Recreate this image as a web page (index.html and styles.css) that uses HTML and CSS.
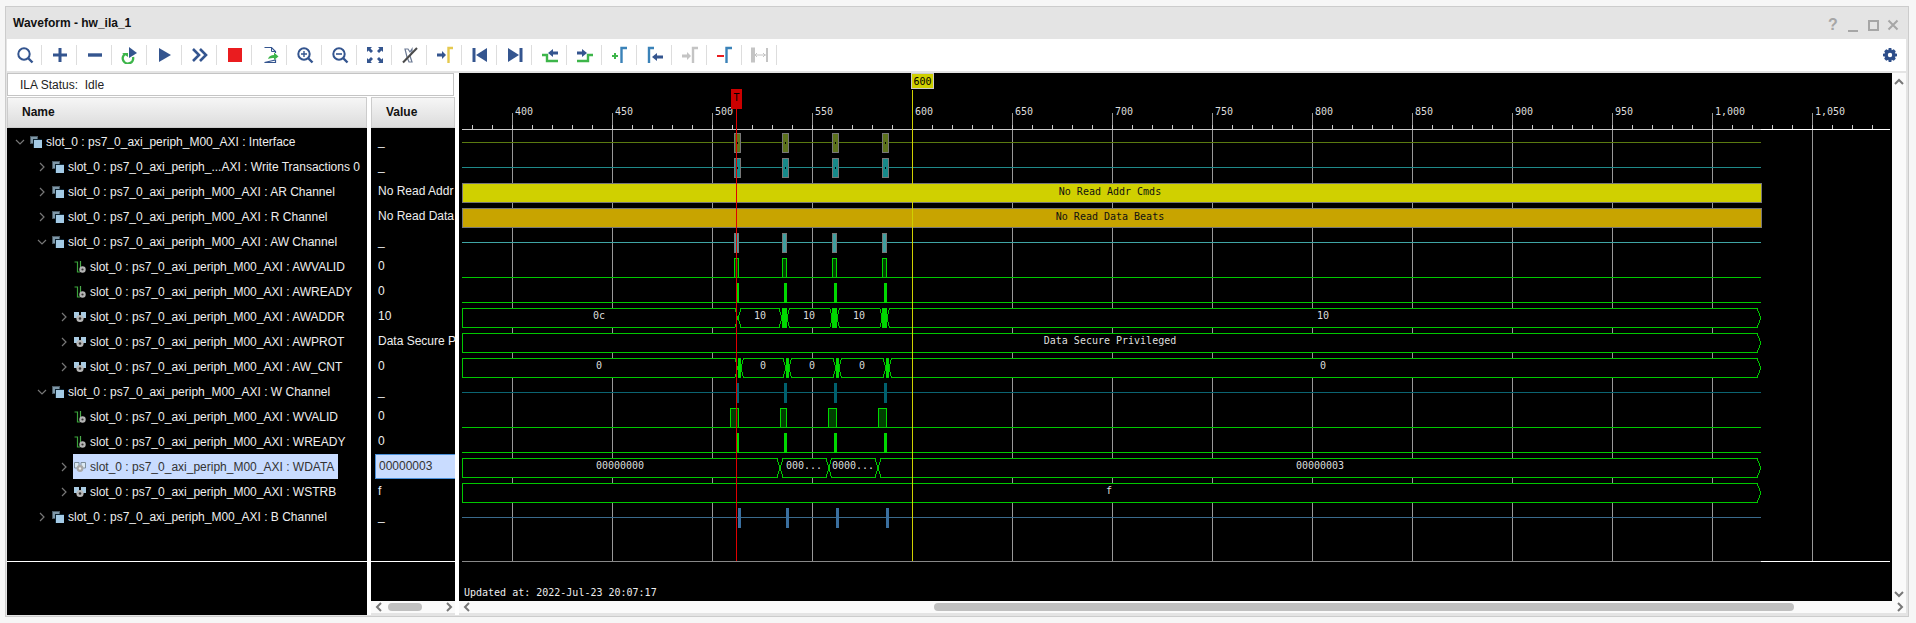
FILE: index.html
```html
<!DOCTYPE html>
<html lang="en">
<head>
    <meta charset="UTF-8">
    <title>Waveform - hw_ila_1</title>
    <link rel="stylesheet" href="styles.css">
</head>
<body>
    <svg class="defs" width="0" height="0">
        <symbol id="chev-r" viewBox="0 0 10 10"><path d="M3 1l4 4-4 4" fill="none" stroke="#777" stroke-width="1.2"/></symbol>
        <symbol id="chev-d" viewBox="0 0 10 10"><path d="M1 3l4 4 4-4" fill="none" stroke="#777" stroke-width="1.2"/></symbol>
        <symbol id="ic-group" viewBox="0 0 12 12">
            <rect x="0" y="0" width="8" height="8" fill="#4b5b66"/>
            <rect x="1" y="1" width="6" height="6" fill="#7f98a8"/>
            <rect x="3" y="3" width="9" height="9" fill="#0c2230"/>
            <rect x="4" y="4" width="8" height="8" fill="#a4cbe6"/>
        </symbol>
        <symbol id="ic-bit" viewBox="0 0 12 12">
            <path d="M0.5 1H3.5V11H6" fill="none" stroke="#3ba33b" stroke-width="1.2"/>
            <path d="M6.5 0V6" stroke="#4aa84a" stroke-width="1.2"/>
            <circle cx="8.5" cy="8.5" r="3.2" fill="#b5b5b5"/>
            <circle cx="8.5" cy="8.5" r="1.1" fill="#333"/>
        </symbol>
        <symbol id="ic-bus" viewBox="0 0 12 12">
            <path d="M0 1H5V5L3 7H0z" fill="#a9cbe2"/>
            <path d="M7 1H12V7H9L7 5z" fill="#a9cbe2"/>
            <circle cx="6" cy="7.5" r="3.6" fill="#b8b8b8"/>
            <circle cx="6" cy="7.5" r="1.3" fill="#333"/>
        </symbol>
        <symbol id="ic-bus-sel" viewBox="0 0 12 12">
            <path d="M0.5 1.5H5V5L3 7H0.5z" fill="#dce9f3" stroke="#7d8e9c"/>
            <path d="M7 1.5H11.5V7H9L7 5z" fill="#dce9f3" stroke="#7d8e9c"/>
            <circle cx="6" cy="7.5" r="3.4" fill="#a8a8a8"/>
            <circle cx="6" cy="7.5" r="1.2" fill="#f0f0f0"/>
        </symbol>
        <symbol id="ic-marker" viewBox="0 0 8 16"><path d="M1.5 16V1.5H7" fill="none" stroke="currentColor" stroke-width="2.4"/></symbol>
    </svg>

    <div class="window">
        <div class="titlebar">
            <span class="title">Waveform - hw_ila_1</span>
            <div class="win-btns">
                <span class="win-btn win-help">?</span>
                <svg class="win-btn" viewBox="0 0 20 20"><path d="M5 16H15" stroke="#a6a6a6" stroke-width="2"/></svg>
                <svg class="win-btn" viewBox="0 0 20 20"><rect x="6" y="6" width="9" height="9" fill="none" stroke="#a6a6a6" stroke-width="2"/></svg>
                <svg class="win-btn" viewBox="0 0 20 20"><path d="M5.5 5.5L14.5 14.5M14.5 5.5L5.5 14.5" stroke="#a6a6a6" stroke-width="2"/></svg>
            </div>
        </div>

        <div class="toolbar">
            <span class="tool"><svg viewBox="0 0 18 18"><circle cx="8" cy="8" r="5.7" fill="none" stroke="#34558f" stroke-width="2"/><path d="M12 12l4.5 4.5" stroke="#34558f" stroke-width="2.4"/></svg></span>
            <span class="tool"><svg viewBox="0 0 18 18"><path d="M2 9H16M9 2V16" stroke="#34558f" stroke-width="3"/></svg></span>
            <span class="tool"><svg viewBox="0 0 18 18"><path d="M2 9H16" stroke="#34558f" stroke-width="3.4"/></svg></span>
            <span class="tool"><svg viewBox="0 0 18 18"><path d="M8 1l8 6-8 5z" fill="#34558f"/><path d="M4 8a5.2 5.2 0 1 0 8 3" fill="none" stroke="#3db54a" stroke-width="2.4"/><path d="M1 7h6v4z" fill="#3db54a"/></svg></span>
            <span class="tool"><svg viewBox="0 0 18 18"><path d="M3 2L15 9 3 16z" fill="#34558f"/></svg></span>
            <span class="tool"><svg viewBox="0 0 18 18"><path d="M2 3L8 9 2 15M9 3L15 9 9 15" fill="none" stroke="#34558f" stroke-width="2.6"/></svg></span>
            <span class="tool"><svg viewBox="0 0 18 18"><rect x="2" y="2" width="14" height="14" fill="#ea1c1f"/></svg></span>
            <span class="tool"><svg viewBox="0 0 18 18"><path d="M3.5 1.5H10.5L14.5 5.5V7M14.5 14V16.5H3.5z" fill="#fff" stroke="#34558f" stroke-width="1.2"/><path d="M10.5 1.5V5.5H14.5" fill="none" stroke="#34558f"/><path d="M7 13c1-3 3-4 6-4V6.5L17.5 10.5 13 14V12c-2 0-4 0-6 1z" fill="#3db54a"/></svg></span>
            <span class="tool"><svg viewBox="0 0 18 18"><circle cx="8" cy="8" r="5.7" fill="none" stroke="#34558f" stroke-width="2"/><path d="M12 12l4.5 4.5" stroke="#34558f" stroke-width="2.4"/><path d="M5 8H11M8 5V11" stroke="#34558f" stroke-width="1.4"/></svg></span>
            <span class="tool"><svg viewBox="0 0 18 18"><circle cx="8" cy="8" r="5.7" fill="none" stroke="#34558f" stroke-width="2"/><path d="M12 12l4.5 4.5" stroke="#34558f" stroke-width="2.4"/><path d="M5 8H11" stroke="#34558f" stroke-width="1.6"/></svg></span>
            <span class="tool"><svg viewBox="0 0 18 18"><path d="M1 1H6L4.5 2.5 7 5 5 7 2.5 4.5 1 6zM17 1V6L15.500 4.500 13 7 11 5 13.500 2.500 12 1zM1 17V12L2.500 13.500 5 11 7 13 4.500 15.500 6 17zM17 17H12L13.500 15.500 11 13 13 11 15.500 13.500 17 12z" fill="#34558f"/></svg></span>
            <span class="tool"><svg viewBox="0 0 18 18"><path d="M4 3H7L9 6 11 3V6L9 10 11 16H8L6 11z" fill="none" stroke="#6c7a94" stroke-width="1.2"/><path d="M2 16.500L16 2" stroke="#4a4a4a" stroke-width="2"/></svg></span>
            <span class="tool"><svg viewBox="0 0 18 18"><path d="M1 7.500H6V5L10 9 6 13V10.500H1z" fill="#34558f"/><path d="M12.500 17V2H17" fill="none" stroke="#e5c94f" stroke-width="2.400"/></svg></span>
            <span class="tool"><svg viewBox="0 0 18 18"><path d="M3 2V16" stroke="#34558f" stroke-width="3"/><path d="M16 2L5 9 16 16z" fill="#34558f"/></svg></span>
            <span class="tool"><svg viewBox="0 0 18 18"><path d="M15 2V16" stroke="#34558f" stroke-width="3"/><path d="M2 2L13 9 2 16z" fill="#34558f"/></svg></span>
            <span class="tool"><svg viewBox="0 0 18 18"><path d="M1 9H6V15H17" fill="none" stroke="#3db54a" stroke-width="2.400"/><path d="M7 7L12 3V5.500H17V8.500H12V11z" fill="#34558f"/></svg></span>
            <span class="tool"><svg viewBox="0 0 18 18"><path d="M1 15H12V9H17" fill="none" stroke="#3db54a" stroke-width="2.400"/><path d="M1 5.500H6V3L11 7 6 11V8.500H1z" fill="#34558f"/></svg></span>
            <span class="tool"><svg viewBox="0 0 18 18"><path d="M1 10H7M4 7V13" stroke="#3db54a" stroke-width="2"/><path d="M10.500 17V2H16" fill="none" stroke="#3a82b8" stroke-width="2.400"/></svg></span>
            <span class="tool"><svg viewBox="0 0 18 18"><path d="M3 17V2H8" fill="none" stroke="#3a82b8" stroke-width="2.400"/><path d="M6 11L11 7V9.500H17V12.500H11V15z" fill="#34558f"/></svg></span>
            <span class="tool"><svg viewBox="0 0 18 18"><path d="M1 8.500H6V6L10 10 6 14V11.500H1z" fill="#c4c4c4"/><path d="M12 17V2H17" fill="none" stroke="#c4c4c4" stroke-width="2.400"/></svg></span>
            <span class="tool"><svg viewBox="0 0 18 18"><path d="M1 10H8" stroke="#ea1c1f" stroke-width="2"/><path d="M10.500 17V2H16" fill="none" stroke="#3a82b8" stroke-width="2.400"/></svg></span>
            <span class="tool"><svg viewBox="0 0 18 18"><path d="M2 2V16M16 2V16" stroke="#c4c4c4" stroke-width="2"/><path d="M3 9H15M6 7L4 9 6 11M12 7L14 9 12 11" fill="none" stroke="#c4c4c4"/><rect x="0.500" y="2" width="3" height="14" fill="none" stroke="#c4c4c4"/></svg></span>
            <span class="tool-end">
                <svg viewBox="0 0 16 16"><path d="M6.500 0H9.500L10 2.500 12.300 1.400 14.600 3.700 13.500 6 16 6.500V9.500L13.500 10 14.600 12.300 12.300 14.600 10 13.500 9.500 16H6.500L6 13.500 3.700 14.600 1.400 12.300 2.500 10 0 9.500V6.500L2.500 6 1.400 3.700 3.700 1.400 6 2.500zM8 5.500A2.500 2.500 0 1 0 8 10.500 2.500 2.500 0 1 0 8 5.500z" fill="#2d4e8a" fill-rule="evenodd"/></svg>
            </span>
        </div>

        <div class="main">
            <div class="left">
                <div class="status">ILA Status:&nbsp; Idle</div>
                <div class="columns">
                    <div class="names">
                        <div class="col-head col-head-name">Name</div>
                        <div class="tree">
                            <div class="row l1"><svg class="chev"><use href="#chev-d"/></svg><span class="node"><svg class="ic"><use href="#ic-group"/></svg>slot_0 : ps7_0_axi_periph_M00_AXI : Interface</span></div>
                            <div class="row l2"><svg class="chev"><use href="#chev-r"/></svg><span class="node"><svg class="ic"><use href="#ic-group"/></svg>slot_0 : ps7_0_axi_periph_...AXI : Write Transactions 0</span></div>
                            <div class="row l2"><svg class="chev"><use href="#chev-r"/></svg><span class="node"><svg class="ic"><use href="#ic-group"/></svg>slot_0 : ps7_0_axi_periph_M00_AXI : AR Channel</span></div>
                            <div class="row l2"><svg class="chev"><use href="#chev-r"/></svg><span class="node"><svg class="ic"><use href="#ic-group"/></svg>slot_0 : ps7_0_axi_periph_M00_AXI : R Channel</span></div>
                            <div class="row l2"><svg class="chev"><use href="#chev-d"/></svg><span class="node"><svg class="ic"><use href="#ic-group"/></svg>slot_0 : ps7_0_axi_periph_M00_AXI : AW Channel</span></div>
                            <div class="row l3"><span class="chev"></span><span class="node"><svg class="ic"><use href="#ic-bit"/></svg>slot_0 : ps7_0_axi_periph_M00_AXI : AWVALID</span></div>
                            <div class="row l3"><span class="chev"></span><span class="node"><svg class="ic"><use href="#ic-bit"/></svg>slot_0 : ps7_0_axi_periph_M00_AXI : AWREADY</span></div>
                            <div class="row l3"><svg class="chev"><use href="#chev-r"/></svg><span class="node"><svg class="ic"><use href="#ic-bus"/></svg>slot_0 : ps7_0_axi_periph_M00_AXI : AWADDR</span></div>
                            <div class="row l3"><svg class="chev"><use href="#chev-r"/></svg><span class="node"><svg class="ic"><use href="#ic-bus"/></svg>slot_0 : ps7_0_axi_periph_M00_AXI : AWPROT</span></div>
                            <div class="row l3"><svg class="chev"><use href="#chev-r"/></svg><span class="node"><svg class="ic"><use href="#ic-bus"/></svg>slot_0 : ps7_0_axi_periph_M00_AXI : AW_CNT</span></div>
                            <div class="row l2"><svg class="chev"><use href="#chev-d"/></svg><span class="node"><svg class="ic"><use href="#ic-group"/></svg>slot_0 : ps7_0_axi_periph_M00_AXI : W Channel</span></div>
                            <div class="row l3"><span class="chev"></span><span class="node"><svg class="ic"><use href="#ic-bit"/></svg>slot_0 : ps7_0_axi_periph_M00_AXI : WVALID</span></div>
                            <div class="row l3"><span class="chev"></span><span class="node"><svg class="ic"><use href="#ic-bit"/></svg>slot_0 : ps7_0_axi_periph_M00_AXI : WREADY</span></div>
                            <div class="row l3"><svg class="chev"><use href="#chev-r"/></svg><span class="node selected"><svg class="ic"><use href="#ic-bus-sel"/></svg>slot_0 : ps7_0_axi_periph_M00_AXI : WDATA</span></div>
                            <div class="row l3"><svg class="chev"><use href="#chev-r"/></svg><span class="node"><svg class="ic"><use href="#ic-bus"/></svg>slot_0 : ps7_0_axi_periph_M00_AXI : WSTRB</span></div>
                            <div class="row l2"><svg class="chev"><use href="#chev-r"/></svg><span class="node"><svg class="ic"><use href="#ic-group"/></svg>slot_0 : ps7_0_axi_periph_M00_AXI : B Channel</span></div>
                        </div>
                        <div class="tree-foot"></div>
                    </div>
                    <div class="values">
                        <div class="col-head col-head-value">Value</div>
                        <div class="tree">
                            <div class="val">_</div>
                            <div class="val">_</div>
                            <div class="val">No Read Addr Cmds</div>
                            <div class="val">No Read Data Beats</div>
                            <div class="val">_</div>
                            <div class="val">0</div>
                            <div class="val">0</div>
                            <div class="val">10</div>
                            <div class="val">Data Secure Privileged</div>
                            <div class="val">0</div>
                            <div class="val">_</div>
                            <div class="val">0</div>
                            <div class="val">0</div>
                            <div class="val val-selected">00000003</div>
                            <div class="val">f</div>
                            <div class="val">_</div>
                        </div>
                        <div class="tree-foot tree-foot-value"></div>
                        <div class="hscroll hscroll-value">
                            <svg class="sb-arrow" viewBox="0 0 8 10"><path d="M6 1L2 5 6 9" fill="none" stroke="#777" stroke-width="2"/></svg>
                            <span class="thumb thumb-value"></span>
                            <svg class="sb-arrow" viewBox="0 0 8 10"><path d="M2 1L6 5 2 9" fill="none" stroke="#777" stroke-width="2"/></svg>
                        </div>
                    </div>
                </div>
            </div>

            <div class="wave-area">
                <svg class="wave" viewBox="459 73 1433 528">
                    <!-- grid and ruler -->
                    <path class="grid" d="M512.500 113V561M612.500 113V561M712.500 113V561M812.500 113V561M912.500 113V561M1012.500 113V561M1112.500 113V561M1212.500 113V561M1312.500 113V561M1412.500 113V561M1512.500 113V561M1612.500 113V561M1712.500 113V561M1812.500 113V561"/>
                    <path class="ticks" d="M472 127H1880"/>
                    <path class="axis" d="M462 129.500H1761"/>
                    <path class="axis-end" d="M1761 129.500H1890"/>
                    <path class="foot" d="M462 561.500H1761"/>
                    <path class="axis-end" d="M1761 561.500H1890"/>
                    <g class="ruler">
                        <text x="515" y="115">400</text><text x="615" y="115">450</text><text x="715" y="115">500</text><text x="815" y="115">550</text><text x="915" y="115">600</text><text x="1015" y="115">650</text><text x="1115" y="115">700</text><text x="1215" y="115">750</text><text x="1315" y="115">800</text><text x="1415" y="115">850</text><text x="1515" y="115">900</text><text x="1615" y="115">950</text><text x="1715" y="115">1,000</text><text x="1815" y="115">1,050</text>
                    </g>

                    <!-- Interface -->
                    <path class="ln-olive" d="M462 142.500H1761"/>
                    <g class="bar-olive"><rect x="734.500" y="133.500" width="6" height="19"/><rect x="782.500" y="133.500" width="6" height="19"/><rect x="832.500" y="133.500" width="6" height="19"/><rect x="882.500" y="133.500" width="6" height="19"/></g>
                    <path class="dots" d="M737.500 142V144M785.500 142V144M835.500 142V144M885.500 142V144"/>
                    <!-- Write Transactions -->
                    <path class="ln-teal" d="M462 167.500H1761"/>
                    <g class="bar-teal"><rect x="734.500" y="158.500" width="6" height="19"/><rect x="782.500" y="158.500" width="6" height="19"/><rect x="832.500" y="158.500" width="6" height="19"/><rect x="882.500" y="158.500" width="6" height="19"/></g>
                    <path class="dots" d="M737.500 167V169M785.500 167V169M835.500 167V169M885.500 167V169"/>
                    <!-- AR / R channel -->
                    <rect class="band-ar" x="462.500" y="183.500" width="1299" height="19"/>
                    <rect class="band-r" x="462.500" y="208.500" width="1299" height="19"/>
                    <text class="band-text" x="1110" y="195">No Read Addr Cmds</text>
                    <text class="band-text" x="1110" y="220">No Read Data Beats</text>
                    <!-- AW channel -->
                    <path class="ln-aqua" d="M462 242.500H1761"/>
                    <g class="bar-aqua"><rect x="734.500" y="233.500" width="4" height="19"/><rect x="782.500" y="233.500" width="4" height="19"/><rect x="832.500" y="233.500" width="4" height="19"/><rect x="882.500" y="233.500" width="4" height="19"/></g>
                    <!-- AWVALID -->
                    <g class="pulse"><rect x="734.500" y="258.500" width="4" height="19"/><rect x="782.500" y="258.500" width="4" height="19"/><rect x="832.500" y="258.500" width="4" height="19"/><rect x="882.500" y="258.500" width="4" height="19"/></g>
                    <path class="sig" d="M462 277.500H1761"/>
                    <!-- AWREADY -->
                    <path class="sig" d="M462 302.500H1761"/>
                    <g class="solid"><rect x="737" y="283" width="2" height="20"/><rect x="784" y="283" width="3" height="20"/><rect x="834" y="283" width="3" height="20"/><rect x="884" y="283" width="3" height="20"/></g>
                    <!-- AWADDR -->
                    <g class="bus">
                        <path d="M462.500 308.500H735L737.500 318 735 327.500H462.500z"/>
                        <path d="M738 318L741 308.500H779L782 318 779 327.500H741z"/>
                        <path d="M787 318L789.500 308.500H830L832 318 830 327.500H789.500z"/>
                        <path d="M837 318L839.500 308.500H880L882 318 880 327.500H839.500z"/>
                        <path d="M887 318L889.500 308.500H1757L1761 318 1757 327.500H889.500z"/>
                    </g>
                    <g class="solid"><rect x="782" y="308" width="5" height="20"/><rect x="832" y="308" width="5" height="20"/><rect x="882" y="308" width="5" height="20"/></g>
                    <!-- AWPROT -->
                    <path class="bus-one" d="M462.500 333.500H1757L1761 343 1757 352.500H462.500z"/>
                    <!-- AW_CNT -->
                    <g class="bus">
                        <path d="M462.500 358.500H735L737.500 368 735 377.500H462.500z"/>
                        <path d="M741 368L743.500 358.500H783L786 368 783 377.500H743.500z"/>
                        <path d="M789 368L791.500 358.500H833L836 368 833 377.500H791.500z"/>
                        <path d="M839 368L841.500 358.500H883L886 368 883 377.500H841.500z"/>
                        <path d="M889 368L891.500 358.500H1757L1761 368 1757 377.500H891.500z"/>
                    </g>
                    <g class="solid"><rect x="738" y="358" width="3" height="20"/><rect x="786" y="358" width="3" height="20"/><rect x="836" y="358" width="3" height="20"/><rect x="886" y="358" width="3" height="20"/></g>
                    <!-- W channel -->
                    <path class="ln-deep" d="M462 392.500H1761"/>
                    <g class="solid-deep"><rect x="737" y="383" width="2" height="20"/><rect x="784" y="383" width="3" height="20"/><rect x="834" y="383" width="3" height="20"/><rect x="884" y="383" width="3" height="20"/></g>
                    <!-- WVALID -->
                    <g class="pulse"><rect x="730.500" y="408.500" width="8" height="19"/><rect x="780.500" y="408.500" width="6" height="19"/><rect x="828.500" y="408.500" width="8" height="19"/><rect x="878.500" y="408.500" width="8" height="19"/></g>
                    <path class="sig" d="M462 427.500H1761"/>
                    <!-- WREADY -->
                    <path class="sig" d="M462 452.500H1761"/>
                    <g class="solid"><rect x="737" y="433" width="2" height="20"/><rect x="784" y="433" width="3" height="20"/><rect x="834" y="433" width="3" height="20"/><rect x="884" y="433" width="3" height="20"/></g>
                    <!-- WDATA -->
                    <g class="bus">
                        <path d="M462.500 458.500H777L780 468 777 477.500H462.500z"/>
                        <path d="M780 468L783 458.500H826L829 468 826 477.500H783z"/>
                        <path d="M829 468L831.500 458.500H875L878 468 875 477.500H831.500z"/>
                        <path d="M878 468L881 458.500H1757L1761 468 1757 477.500H881z"/>
                    </g>
                    <!-- WSTRB -->
                    <path class="bus-one" d="M462.500 483.500H1757L1761 493 1757 502.500H462.500z"/>
                    <!-- B channel -->
                    <path class="ln-steel" d="M462 517.500H1761"/>
                    <g class="solid-steel"><rect x="738" y="508" width="3" height="20"/><rect x="786" y="508" width="3" height="20"/><rect x="836" y="508" width="3" height="20"/><rect x="886" y="508" width="3" height="20"/></g>

                    <g class="bus-text">
                        <text x="599" y="319">0c</text><text x="760" y="319">10</text><text x="809" y="319">10</text><text x="859" y="319">10</text><text x="1323" y="319">10</text>
                        <text x="1110" y="344">Data Secure Privileged</text>
                        <text x="599" y="369">0</text><text x="763" y="369">0</text><text x="812" y="369">0</text><text x="862" y="369">0</text><text x="1323" y="369">0</text>
                        <text x="620" y="469">00000000</text><text x="804" y="469">000...</text><text x="853" y="469">0000...</text><text x="1320" y="469">00000003</text>
                        <text x="1109" y="494">f</text>
                    </g>

                    <!-- cursors -->
                    <path class="cur-yellow" d="M912.500 90V561"/>
                    <rect class="flag-yellow" x="911.500" y="73.500" width="22" height="15"/>
                    <text class="flag-text" x="922.500" y="85">600</text>
                    <path class="cur-red" d="M736.500 109V561"/>
                    <rect class="flag-red" x="731" y="89" width="11" height="20"/>
                    <text class="flag-text" x="736.500" y="101">T</text>

                    <text class="updated" x="464" y="596">Updated at: 2022-Jul-23 20:07:17</text>
                </svg>
                <div class="vscroll">
                    <svg class="sb-arrow-v" viewBox="0 0 12 8"><path d="M2 6L6 2 10 6" fill="none" stroke="#777" stroke-width="2"/></svg>
                    <svg class="sb-arrow-v" viewBox="0 0 12 8"><path d="M2 2L6 6 10 2" fill="none" stroke="#777" stroke-width="2"/></svg>
                </div>
                <div class="hscroll hscroll-wave">
                    <svg class="sb-arrow" viewBox="0 0 8 10"><path d="M6 1L2 5 6 9" fill="none" stroke="#777" stroke-width="2"/></svg>
                    <span class="thumb thumb-wave"></span>
                    <svg class="sb-arrow" viewBox="0 0 8 10"><path d="M2 1L6 5 2 9" fill="none" stroke="#777" stroke-width="2"/></svg>
                </div>
            </div>
        </div>
    </div>
</body>
</html>
```

FILE: styles.css
```css
html, body {
    margin: 0;
    padding: 0;
    height: 100%;
    overflow: hidden;
    background-color: #f6f6f6;
    font-family: "Liberation Sans", Arial, sans-serif;
    font-size: 12px;
}

.defs {
    position: absolute;
}

.window {
    box-sizing: border-box;
    width: 1904px;
    height: 611px;
    margin: 6px 0 0 5px;
    border: 1px solid #cccccc;
    padding: 0 2px 1px 1px;
    background-color: #e4e4e4;
}

.titlebar {
    height: 32px;
    display: flex;
    align-items: center;
    justify-content: space-between;
}

.title {
    margin-left: 6px;
    font-weight: bold;
    color: #111111;
}

.win-btns {
    display: flex;
    align-items: center;
    margin: 3px 3px 0 0;
}

.win-btn {
    width: 20px;
    height: 20px;
}

.win-help {
    text-align: center;
    font-size: 16px;
    line-height: 20px;
    font-weight: bold;
    color: #a6a6a6;
}

.toolbar {
    height: 32px;
    display: flex;
    align-items: center;
    background-color: #ffffff;
}

.tool {
    box-sizing: border-box;
    width: 35px;
    height: 20px;
    display: flex;
    align-items: center;
    justify-content: center;
    border-right: 1px solid #dddddd;
}

.tool svg {
    width: 18px;
    height: 18px;
    margin-right: -1px;
}

.tool-end {
    margin-left: auto;
    margin-right: 9px;
    display: flex;
}

.tool-end svg {
    width: 14px;
    height: 14px;
}

.main {
    height: 542px;
    margin-top: 2px;
    display: flex;
    gap: 4px;
    background-color: #ffffff;
}

.left {
    width: 448px;
    display: flex;
    flex-direction: column;
}

.status {
    box-sizing: border-box;
    width: 447px;
    height: 23px;
    padding-left: 12px;
    line-height: 22px;
    border: 1px solid #c4c4c4;
    color: #222222;
}

.columns {
    flex: 1;
    margin-top: 1px;
    display: flex;
    gap: 4px;
}

.names {
    width: 360px;
    display: flex;
    flex-direction: column;
}

.values {
    width: 84px;
    display: flex;
    flex-direction: column;
}

.col-head {
    box-sizing: border-box;
    height: 31px;
    line-height: 29px;
    border: 1px solid #cccccc;
    font-weight: bold;
    color: #111111;
    background: linear-gradient(#f6f6f6, #dcdcdc);
}

.col-head-name {
    padding-left: 14px;
}

.col-head-value {
    padding-left: 14px;
}

.tree {
    box-sizing: border-box;
    height: 433px;
    padding-top: 1px;
    background-color: #000000;
    color: #eeeeee;
    overflow: hidden;
}

.tree-foot {
    flex: 1;
    border-top: 1px solid #ffffff;
    background-color: #000000;
}

.tree-foot-value {
    flex: none;
    height: 39px;
}

.row {
    height: 25px;
    display: flex;
    align-items: center;
    white-space: nowrap;
}

.l1 { padding-left: 8px; }
.l2 { padding-left: 30px; }
.l3 { padding-left: 52px; }

.chev {
    width: 10px;
    height: 10px;
    margin-right: 4px;
    flex: none;
}

.node {
    height: 25px;
    display: flex;
    align-items: center;
    gap: 4px;
    padding: 0 4px 0 1px;
}

.node.selected {
    background-color: #c9dcff;
    color: #333333;
}

.ic {
    width: 12px;
    height: 12px;
    flex: none;
}

.val {
    box-sizing: border-box;
    height: 25px;
    line-height: 25px;
    padding-left: 7px;
    white-space: nowrap;
    overflow: hidden;
}

.val-selected {
    padding-left: 3px;
    line-height: 23px;
    margin-left: 4px;
    border: 1px solid #4a90d9;
    border-right: none;
    background-color: #c9dcff;
    color: #333333;
}

.hscroll {
    box-sizing: border-box;
    height: 14px;
    display: flex;
    align-items: center;
    border-bottom: 2px solid #e4e4e4;
    background-color: #fafafa;
}

.sb-arrow {
    width: 8px;
    height: 10px;
    flex: none;
}

.sb-arrow-v {
    width: 12px;
    height: 8px;
}

.hscroll-value {
    padding: 0 2px 0 4px;
}

.thumb {
    height: 8px;
    border-radius: 4px;
    background-color: #c0c0c0;
}

.thumb-value {
    width: 34px;
    margin: 0 23px 0 5px;
}

.hscroll-wave {
    grid-column: 1 / 3;
    padding: 0 2px 0 4px;
}

.thumb-wave {
    width: 860px;
    margin: 0 102px 0 463px;
}

.wave-area {
    display: grid;
    grid-template-columns: 1433px 14px;
    grid-template-rows: 528px 14px;
    width: 1447px;
    background-color: #ffffff;
}

.wave {
    display: block;
    width: 1433px;
    height: 528px;
    background-color: #000000;
    shape-rendering: crispEdges;
    font-family: "DejaVu Sans Mono", "Liberation Mono", monospace;
    font-size: 10px;
}

.vscroll {
    display: flex;
    flex-direction: column;
    align-items: center;
    justify-content: space-between;
    padding: 5px 0 3px;
    box-sizing: border-box;
    background-color: #fafafa;
}

.wave text {
    fill: #dddddd;
}

.wave path {
    fill: none;
}

.grid { stroke: #999999; }
.ticks { stroke: #cccccc; stroke-width: 4; stroke-dasharray: 1 19; }
.axis { stroke: #cccccc; }
.axis-end { stroke: #ffffff; }
.foot { stroke: #888888; }

.ln-olive { stroke: #5a7a10; }
.ln-teal { stroke: #1f8a8a; }
.ln-aqua { stroke: #3fa5a5; }
.ln-deep { stroke: #0b6472; }
.ln-steel { stroke: #3a6a8c; }
.sig { stroke: #00c800; }
.dots { stroke: #000000; }

.bar-olive rect { fill: #5c721c; stroke: #777777; }
.bar-teal rect { fill: #178a8a; stroke: #777777; }
.bar-aqua rect { fill: #3f9f9f; stroke: #777777; }
.band-ar { fill: #d0d000; stroke: #777777; }
.band-r { fill: #c8a400; stroke: #777777; }
.wave .band-text { fill: #111111; text-anchor: middle; }

.pulse rect { fill: #003f00; stroke: #00d800; }
.solid rect { fill: #00d800; }
.solid-deep rect { fill: #00606e; }
.solid-steel rect { fill: #3a6f9f; }

.bus path, .wave .bus-one { fill: #000000; stroke: #00c800; }
.bus-text text { text-anchor: middle; }

.cur-yellow { stroke: #d0d000; }
.cur-red { stroke: #e00000; }
.flag-yellow { fill: #cfcf00; stroke: #cccccc; }
.flag-red { fill: #cc0000; }
.wave .flag-text { fill: #000000; text-anchor: middle; }
.wave .updated { fill: #eeeeee; }
```
